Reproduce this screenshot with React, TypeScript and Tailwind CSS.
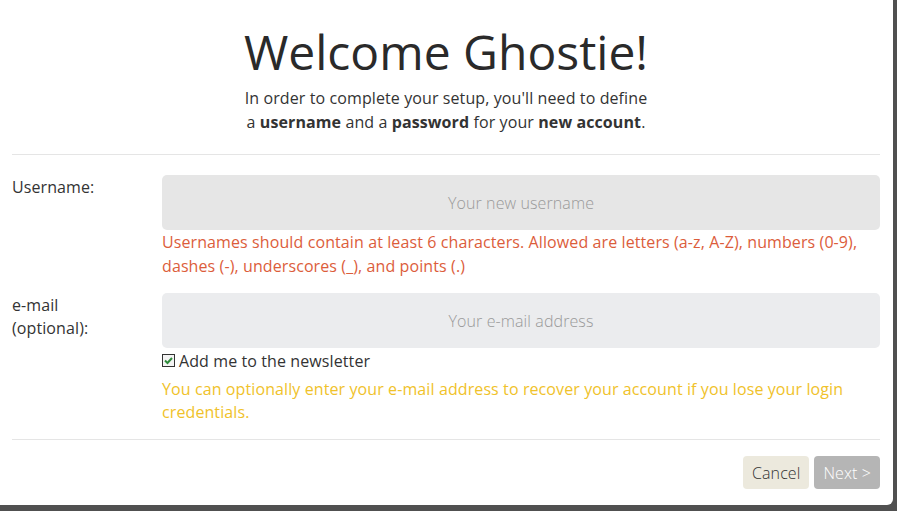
import React from "react";

// ─── form row: label column + field column ────────────────────────────────
const Row = ({ label, children }: { label: React.ReactNode; children: React.ReactNode }) => (
  <div className="flex">
    <label className="w-[150px] shrink-0 text-[16px] leading-[23px] text-[#333] pt-[1px]">{label}</label>
    <div className="flex-1 flex flex-col">{children}</div>
  </div>
);

const Field = ({ placeholder, bg }: { placeholder: string; bg: string }) => (
  <input
    placeholder={placeholder}
    className={`h-[55px] w-full rounded-[5px] text-center text-[16px] font-light text-[#333] placeholder:text-[#999] outline-none ${bg}`}
  />
);

const CheckMark = () => (
  <svg width="13" height="13" viewBox="0 0 13 13" className="shrink-0">
    <rect x="0.5" y="0.5" width="12" height="12" fill="#f4f4f4" stroke="#333" />
    <path d="M3 6.5 L5.5 9 L10 4" fill="none" stroke="#2e8b3a" strokeWidth="2" />
  </svg>
);

export default function App() {
  return (
    <div className="w-full h-[511px] bg-[#505050] overflow-hidden" style={{ fontFamily: '"Open Sans", sans-serif' }}>
      <div className="w-[893px] h-[505px] bg-white rounded-br-[6px] flex flex-col tracking-[0.1px]">
        {/* header */}
        <div className="px-[12px] pr-[13px]">
          <div className="pt-[24px] pb-[20px] border-b border-[#e5e5e5] text-center">
            <h1 className="text-[48px] leading-[56px] text-[#2a2a2a] tracking-normal">Welcome Ghostie!</h1>
            <p className="mt-[6px] text-[16px] leading-[24px] text-[#333]">
              In order to complete your setup, you'll need to define
              <br />a <b>username</b> and a <b>password</b> for your <b>new account</b>.
            </p>
          </div>
        </div>

        {/* body */}
        <div className="px-[12px] pr-[13px]">
          <div className="pt-[20px] pb-[15px] border-b border-[#e5e5e5] flex flex-col gap-[15px]">
            <Row label="Username:">
              <Field placeholder="Your new username" bg="bg-[#e6e6e6]" />
              <p className="text-[16px] leading-[24px] text-[#dc5d3b]">
                Usernames should contain at least 6 characters. Allowed are letters (a-z, A-Z), numbers (0-9),
                dashes (-), underscores (_), and points (.)
              </p>
            </Row>
            <Row
              label={
                <>
                  e-mail
                  <br />
                  (optional):
                </>
              }
            >
              <Field placeholder="Your e-mail address" bg="bg-[#ebecee]" />
              <div className="flex items-center gap-[4px] h-[25px] text-[16px] text-[#333]">
                <CheckMark />
                <span>Add me to the newsletter</span>
              </div>
              <p className="mt-[5px] text-[16px] leading-[23px] text-[#f0c22a]">
                You can optionally enter your e-mail address to recover your account if you lose your login
                credentials.
              </p>
            </Row>
          </div>
        </div>

        {/* footer */}
        <div className="flex justify-end gap-[5px] pt-[16px] pr-[13px]">
          <button className="h-[33px] px-[9px] rounded-[4px] bg-[#ece9dd] text-[16px] font-light text-[#333]">
            Cancel
          </button>
          <button className="h-[33px] px-[9px] rounded-[4px] bg-[#b5b5b5] text-[16px] font-light text-white">
            Next &gt;
          </button>
        </div>
      </div>
    </div>
  );
}
